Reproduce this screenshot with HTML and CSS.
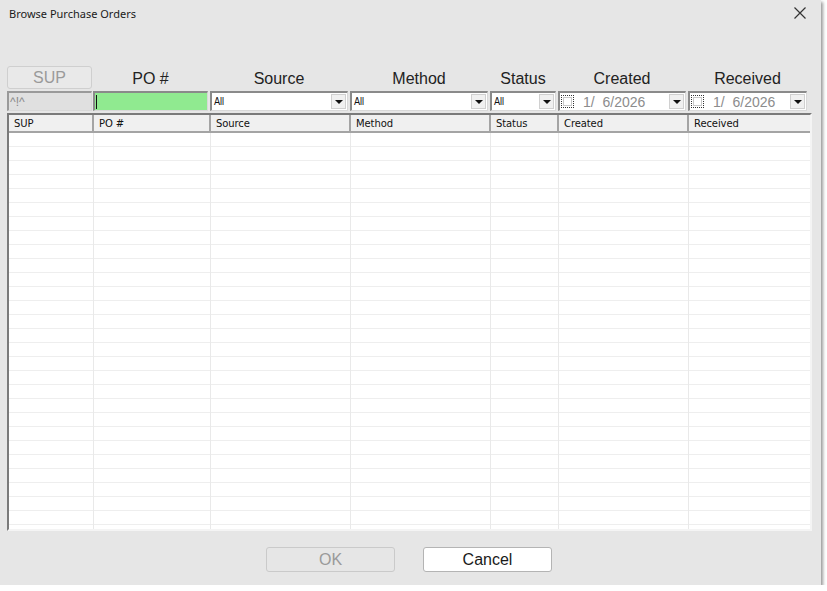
FILE: index.html
```html
<!DOCTYPE html>
<html>
<head>
<meta charset="utf-8">
<title>Browse Purchase Orders</title>
<link rel="stylesheet" href="styles.css">
</head>
<body>
<div class="window">
  <div class="titlebar">
    <span class="title">Browse Purchase Orders</span>
    <svg class="close" width="12" height="12" viewBox="0 0 12 12"><path d="M0.5 0.5L11.5 11.5M11.5 0.5L0.5 11.5" stroke="#333" stroke-width="1.2" fill="none"/></svg>
  </div>
  <div class="content">
    <div class="cols labels">
      <div class="supbtn">SUP</div>
      <div class="lbl">PO #</div>
      <div class="lbl">Source</div>
      <div class="lbl">Method</div>
      <div class="lbl">Status</div>
      <div class="lbl">Created</div>
      <div class="lbl">Received</div>
    </div>
    <div class="cols filters">
      <div class="box supfilter">^!^</div>
      <div class="box poinput"><span class="caret"></span></div>
      <div class="box combo"><span class="val">All</span><span class="drop"><i></i></span></div>
      <div class="box combo"><span class="val">All</span><span class="drop"><i></i></span></div>
      <div class="box combo"><span class="val">All</span><span class="drop"><i></i></span></div>
      <div class="box combo date"><span class="chk"></span><span class="dval">1/&nbsp; 6/2026</span><span class="drop"><i></i></span></div>
      <div class="box combo date"><span class="chk"></span><span class="dval">1/&nbsp; 6/2026</span><span class="drop"><i></i></span></div>
    </div>
    <div class="table">
      <div class="tcols thead">
        <div class="th">SUP</div>
        <div class="th">PO #</div>
        <div class="th">Source</div>
        <div class="th">Method</div>
        <div class="th">Status</div>
        <div class="th">Created</div>
        <div class="th last">Received</div>
      </div>
      <div class="tcols tbody">
        <div class="td"></div>
        <div class="td"></div>
        <div class="td"></div>
        <div class="td"></div>
        <div class="td"></div>
        <div class="td"></div>
        <div class="td last"></div>
      </div>
    </div>
  </div>
  <div class="footer">
    <button class="btn disabled">OK</button>
    <button class="btn">Cancel</button>
  </div>
</div>
</body>
</html>
```
FILE: styles.css
```css
html, body {
  margin: 0;
  padding: 0;
  background: #ffffff;
}
.window {
  width: 821px;
  height: 585px;
  background: #e6e6e6;
  box-shadow: 2px 2px 3px rgba(0,0,0,0.4);
  display: flex;
  flex-direction: column;
  font-family: "Liberation Sans", Arial, sans-serif;
}
.titlebar {
  height: 28px;
  display: flex;
  align-items: center;
  justify-content: space-between;
  padding: 0 15px 2px 9px;
  box-sizing: border-box;
}
.title {
  font-family: "Noto Sans", "Open Sans", sans-serif;
  font-size: 11px;
  color: #1a1a1a;
}
.close { display: block; }
.content {
  margin-top: 38px;
  padding-left: 7px;
}
.cols {
  display: grid;
  grid-template-columns: 86px 117px 140px 140px 68px 130px 121px;
}
.labels {
  height: 23px;
  margin-bottom: 2px;
}
.supbtn {
  width: 85px;
  box-sizing: border-box;
  border: 1px solid #cfcfcf;
  border-radius: 3px;
  background: #e9e9e9;
  color: #9a9a9a;
  font-size: 16px;
  display: flex;
  align-items: center;
  justify-content: center;
}
.lbl {
  font-size: 16px;
  color: #222;
  display: flex;
  align-items: center;
  justify-content: center;
  padding-top: 2px;
  padding-right: 2px;
}
.filters {
  height: 20px;
  margin-bottom: 2px;
}
.box {
  box-sizing: border-box;
  height: 20px;
  border-top: 2px solid #8a8a8a;
  border-left: 2px solid #8a8a8a;
  border-right: 1px solid #d8d8d8;
  border-bottom: 1px solid #d8d8d8;
  margin-right: 2px;
  display: flex;
  align-items: center;
  font-size: 11px;
}
.supfilter {
  width: 85px;
  margin-right: 0;
  background: #e0e0e0;
  color: #8a8a8a;
  font-size: 12px;
  padding-left: 1px;
  border-top-color: #9a9a9a;
  border-left-color: #9a9a9a;
}
.poinput {
  background: #90ea90;
  padding-left: 1px;
}
.caret {
  width: 1px;
  height: 14px;
  background: #111;
}
.combo {
  background: #fff;
  justify-content: space-between;
  padding: 0 1px 0 2px;
  color: #111;
}
.val {
  font-family: "DejaVu Sans Condensed", "DejaVu Sans", sans-serif;
  font-size: 10px;
  letter-spacing: -0.4px;
}
.drop {
  width: 15px;
  height: 15px;
  background: #f0f0f0;
  border: 1px solid #d0d0d0;
  box-sizing: border-box;
  display: flex;
  align-items: center;
  justify-content: center;
}
.drop i {
  width: 0;
  height: 0;
  border-left: 4px solid transparent;
  border-right: 4px solid transparent;
  border-top: 4px solid #111;
  margin-top: 1px;
}
.date {
  padding-left: 1px;
}
.chk {
  width: 13px;
  height: 13px;
  box-sizing: border-box;
  border: 1px dotted #333;
  background: #fff;
  position: relative;
}
.chk::after {
  content: "";
  position: absolute;
  inset: 1px;
  border: 1px solid #c8c8c8;
}
.dval {
  flex: 1;
  font-size: 14px;
  color: #8c8c8c;
  padding-left: 9px;
}
.table {
  width: 805px;
  height: 418px;
  box-sizing: border-box;
  border-top: 2px solid #7a7a7a;
  border-left: 2px solid #7a7a7a;
  border-right: 2px solid #f4f4f4;
  border-bottom: 2px solid #f4f4f4;
  background: #fff;
  display: flex;
  flex-direction: column;
}
.tcols {
  display: grid;
  grid-template-columns: 85px 117px 140px 140px 68px 130px 119px;
}
.thead {
  height: 16px;
  background: #f0f0f0;
  border-bottom: 2px solid #a4a4a4;
}
.th {
  font-family: "DejaVu Sans", sans-serif;
  font-size: 10px;
  letter-spacing: -0.1px;
  color: #111;
  padding-left: 5px;
  line-height: 17px;
  border-right: 2px solid #a4a4a4;
  box-sizing: border-box;
  overflow: hidden;
}
.th.last { border-right: none; }
.tbody {
  flex: 1;
  background: repeating-linear-gradient(to bottom, #ffffff 0, #ffffff 13px, #eeeeee 13px, #eeeeee 14px);
}
.td {
  border-right: 1px solid #e9e9e9;
}
.td.last { border-right: none; }
.footer {
  display: flex;
  justify-content: center;
  gap: 28px;
  margin-top: 16px;
  padding-right: 3px;
}
.btn {
  width: 129px;
  height: 25px;
  box-sizing: border-box;
  font-family: "Liberation Sans", Arial, sans-serif;
  font-size: 16px;
  background: #fff;
  color: #1a1a1a;
  border: 1px solid #b4b4b4;
  border-radius: 3px;
  padding: 0;
}
.btn.disabled {
  background: #e6e6e6;
  color: #9a9a9a;
  border-color: #cacaca;
}
```
